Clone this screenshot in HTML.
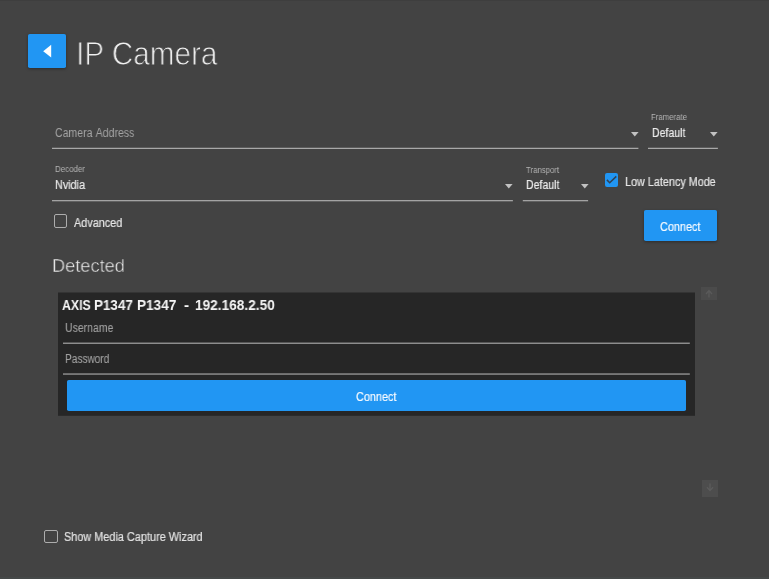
<!DOCTYPE html><html><head><meta charset="utf-8"><title>IP Camera</title><style>
html,body{margin:0;padding:0;}
body{width:769px;height:579px;overflow:hidden;background:#434343;position:relative;font-family:"Liberation Sans",sans-serif;}
.t{position:absolute;white-space:nowrap;line-height:1;transform-origin:0 0;display:block;will-change:transform;-webkit-font-smoothing:antialiased;}
.btn{position:absolute;background:#2196f3;border-radius:1.8px;box-shadow:0 1px 3px rgba(0,0,0,.35);}
.cb{position:absolute;box-sizing:border-box;width:13.2px;height:13.6px;border:1.5px solid #adadad;border-radius:2px;}
.arr{position:absolute;fill:#c2c2c2;}
#t_title{left:75.60px;top:36.32px;font-size:34px;color:#f0f0f0;font-weight:400;transform:scaleX(0.8734);-webkit-text-stroke:0.9px #434343;}
#t_cam{left:54.80px;top:127.14px;font-size:12px;color:#a4a4a4;font-weight:400;transform:scaleX(0.8786);word-spacing:1px;}
#t_fr{left:651.00px;top:113.38px;font-size:9px;color:#b4b4b4;font-weight:400;transform:scaleX(0.8671);}
#t_def1{left:651.60px;top:127.34px;font-size:12px;color:#ececec;font-weight:400;transform:scaleX(0.8782);-webkit-text-stroke:0.2px #ececec;}
#t_dec{left:55.00px;top:165.48px;font-size:9px;color:#b4b4b4;font-weight:400;transform:scaleX(0.8815);}
#t_nv{left:55.00px;top:179.34px;font-size:12px;color:#ececec;font-weight:400;transform:scaleX(0.8993);-webkit-text-stroke:0.2px #ececec;}
#t_tr{left:525.70px;top:165.68px;font-size:9px;color:#b4b4b4;font-weight:400;transform:scaleX(0.8642);}
#t_def2{left:525.90px;top:179.34px;font-size:12px;color:#ececec;font-weight:400;transform:scaleX(0.8782);-webkit-text-stroke:0.2px #ececec;}
#t_llm{left:625.10px;top:175.84px;font-size:12px;color:#e6e6e6;font-weight:400;transform:scaleX(0.9004);-webkit-text-stroke:0.2px #e6e6e6;}
#t_adv{left:74.40px;top:216.54px;font-size:12px;color:#e6e6e6;font-weight:400;transform:scaleX(0.9049);-webkit-text-stroke:0.2px #e6e6e6;}
#t_con1{left:660.30px;top:221.34px;font-size:12px;color:#f8fbff;font-weight:400;transform:scaleX(0.9060);-webkit-text-stroke:0.2px #f8fbff;}
#t_det{left:52.40px;top:255.92px;font-size:19px;color:#ececec;font-weight:400;transform:scaleX(0.9573);-webkit-text-stroke:0.4px #434343;}
#t_ax1{left:62.30px;top:298.15px;font-size:14px;color:#f5f5f5;font-weight:700;transform:scaleX(0.8811);}
#t_ax2{left:94.20px;top:298.15px;font-size:14px;color:#f5f5f5;font-weight:700;transform:scaleX(0.9584);}
#t_ax3{left:137.10px;top:298.15px;font-size:14px;color:#f5f5f5;font-weight:700;transform:scaleX(0.9707);}
#t_ax4{left:183.50px;top:298.15px;font-size:14px;color:#f5f5f5;font-weight:700;transform:scaleX(1.0916);}
#t_ax5{left:195.40px;top:298.15px;font-size:14px;color:#f5f5f5;font-weight:700;transform:scaleX(0.9761);}
#t_user{left:65.40px;top:321.84px;font-size:12px;color:#a0a0a0;font-weight:400;transform:scaleX(0.8743);-webkit-text-stroke:0.1px #a0a0a0;}
#t_pass{left:65.40px;top:352.94px;font-size:12px;color:#a0a0a0;font-weight:400;transform:scaleX(0.8408);-webkit-text-stroke:0.1px #a0a0a0;}
#t_con2{left:355.80px;top:390.54px;font-size:12px;color:#f8fbff;font-weight:400;transform:scaleX(0.9060);-webkit-text-stroke:0.2px #f8fbff;}
#t_wiz{left:63.90px;top:531.34px;font-size:12px;color:#e2e2e2;font-weight:400;transform:scaleX(0.9075);-webkit-text-stroke:0.2px #e2e2e2;}
</style></head><body>

<!-- back button -->
<div class="btn" style="left:28px;top:34px;width:38.2px;height:33.6px;"></div>
<svg style="position:absolute;left:40px;top:42px" width="16" height="18" viewBox="0 0 16 18"><polygon points="3.2,9.2 11.2,2.8 11.2,15.5" fill="#ffffff"/></svg>

<!-- underlines -->
<svg style="position:absolute;left:0;top:0" width="769" height="579" viewBox="0 0 769 579">
<g fill="#a8a8a8">
<rect x="52" y="147.75" width="586.4" height="1.25"/>
<rect x="648" y="147.75" width="69.9" height="1.25"/>
<rect x="52" y="200.05" width="460.9" height="1.25"/>
<rect x="522.8" y="200.05" width="65.3" height="1.25"/>
</g>
</svg>
<!-- row 1 -->
<svg class="arr" style="left:630.7px;top:131.8px" width="8" height="5" viewBox="0 0 8 5"><polygon points="0,0 7.6,0 3.8,4.6"/></svg>
<svg class="arr" style="left:710.1px;top:131.8px" width="8" height="5" viewBox="0 0 8 5"><polygon points="0,0 7.6,0 3.8,4.6"/></svg>

<!-- row 2 -->
<svg class="arr" style="left:505.4px;top:183.8px" width="8" height="5" viewBox="0 0 8 5"><polygon points="0,0 7.6,0 3.8,4.6"/></svg>
<svg class="arr" style="left:580.7px;top:183.8px" width="8" height="5" viewBox="0 0 8 5"><polygon points="0,0 7.6,0 3.8,4.6"/></svg>

<!-- low latency checkbox -->
<div style="position:absolute;left:604.7px;top:172.8px;width:13.6px;height:14px;background:#2196f3;border-radius:2px;"></div>
<svg style="position:absolute;left:604.7px;top:172.8px" width="14" height="14" viewBox="0 0 14 14"><path d="M1.9 6.9 L4.7 9.7 L11.3 3.4" fill="none" stroke="#2f4256" stroke-width="1.5"/></svg>

<!-- advanced checkbox -->
<div class="cb" style="left:54.2px;top:214.2px;"></div>

<!-- connect -->
<div class="btn" style="left:644px;top:210.4px;width:73.3px;height:30.9px;"></div>

<!-- card -->
<svg style="position:absolute;left:0;top:0" width="769" height="579" viewBox="0 0 769 579">
<rect x="58" y="292.5" width="637" height="123.3" fill="#262626"/>
<g fill="#939393">
<rect x="63" y="342.55" width="626.8" height="1.4"/>
<rect x="63" y="373.35" width="626.8" height="1.4"/>
</g>
</svg>
<div class="btn" style="left:67px;top:380px;width:619.2px;height:30.9px;box-shadow:none"></div>

<!-- faint scroll buttons -->
<div style="position:absolute;left:701.3px;top:286.8px;width:16px;height:13px;background:#4b4b4b;"></div>
<svg style="position:absolute;left:701.3px;top:286.8px" width="16" height="13" viewBox="0 0 16 13"><path d="M8 10.5 V4 M5 7 L8 3.6 L11 7" fill="none" stroke="#5a5a5a" stroke-width="1.3"/></svg>
<div style="position:absolute;left:701.5px;top:480.4px;width:16.3px;height:16.4px;background:#4d4d4d;"></div>
<svg style="position:absolute;left:701.5px;top:480.4px" width="16" height="16" viewBox="0 0 16 16"><path d="M8 3.5 V10 M5 7.2 L8 10.6 L11 7.2" fill="none" stroke="#5c5c5c" stroke-width="1.3"/></svg>

<!-- edge stripes -->
<div style="position:absolute;left:0;top:0;width:769px;height:1px;background:#3e3e3e;"></div>
<div style="position:absolute;left:0;top:577px;width:769px;height:2px;background:#454848;"></div>

<!-- wizard checkbox -->
<div class="cb" style="left:44.4px;top:529.5px;"></div>
<div class="t" id="t_title">IP Camera</div>
<div class="t" id="t_cam">Camera Address</div>
<div class="t" id="t_fr">Framerate</div>
<div class="t" id="t_def1">Default</div>
<div class="t" id="t_dec">Decoder</div>
<div class="t" id="t_nv">Nvidia</div>
<div class="t" id="t_tr">Transport</div>
<div class="t" id="t_def2">Default</div>
<div class="t" id="t_llm">Low Latency Mode</div>
<div class="t" id="t_adv">Advanced</div>
<div class="t" id="t_con1">Connect</div>
<div class="t" id="t_det">Detected</div>
<div class="t" id="t_ax1">AXIS</div>
<div class="t" id="t_ax2">P1347</div>
<div class="t" id="t_ax3">P1347</div>
<div class="t" id="t_ax4">-</div>
<div class="t" id="t_ax5">192.168.2.50</div>
<div class="t" id="t_user">Username</div>
<div class="t" id="t_pass">Password</div>
<div class="t" id="t_con2">Connect</div>
<div class="t" id="t_wiz">Show Media Capture Wizard</div>
</body></html>
